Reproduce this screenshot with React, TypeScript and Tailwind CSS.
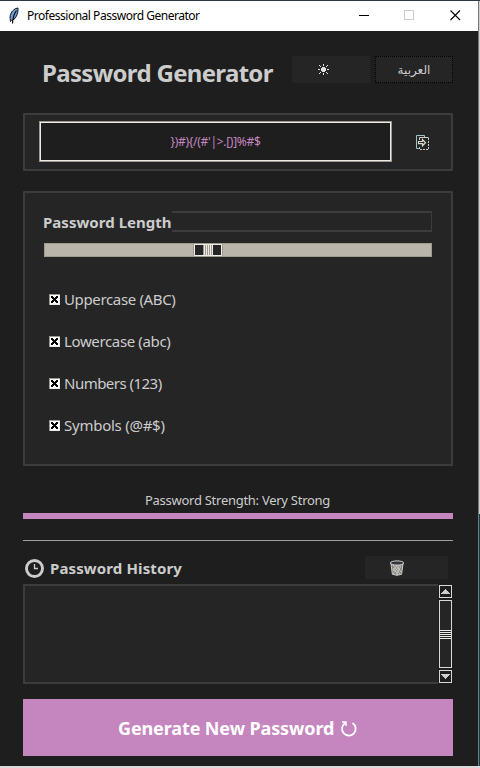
import React from "react";

function Feather() {
  return (
    <svg width="16" height="18" viewBox="0 0 16 18" className="ml-[6px] shrink-0">
      <path d="M4.5 14.5 Q3 8 6.5 4 Q9 1 12 1 Q12.5 5 10.5 9 Q8.5 13 5.5 13.5Z" fill="#6f9fd8" stroke="#15181f" strokeWidth="1" />
      <path d="M10.5 3.5 Q7 8 6.5 16.5" fill="none" stroke="#0a0a0a" strokeWidth="1.2" />
    </svg>
  );
}

function TitleBar() {
  return (
    <div className="flex h-[30px] items-center bg-white text-black">
      <Feather />
      <span className="ml-[5px] w-[190px] whitespace-nowrap text-[12px] leading-[16px] tracking-[-0.48px]">Professional Password Generator</span>
      <svg width="120" height="30" viewBox="0 0 120 30" className="ml-auto mr-[7px]" shapeRendering="crispEdges">
        <path d="M8 14.5h10" stroke="#000" />
        <rect x="53.5" y="9.5" width="9" height="9" fill="none" stroke="#cccccc" />
        <path d="M99.5 9.5l9.5 9.5M109 9.5l-9.5 9.5" stroke="#000" strokeWidth="1.1" shapeRendering="auto" />
      </svg>
    </div>
  );
}

function Sun() {
  return (
    <svg width="11" height="11" viewBox="0 0 11 11" shapeRendering="crispEdges" className="-ml-[16px]">
      <path d="M4 3h3v1h1v3H7v1H4V7H3V4h1zM5 0h1v2H5zM5 9h1v2H5zM0 5h2v1H0zM9 5h2v1H9zM1 1h1v1H1zM2 2h1v1H2zM9 1h1v1H9zM8 2h1v1H8zM1 9h1v1H1zM2 8h1v1H2zM9 9h1v1H9zM8 8h1v1H8z" fill="#e0e0e0" />
    </svg>
  );
}

function CopyIcon() {
  return (
    <svg width="13" height="15" viewBox="0 0 13 15" className="ml-[24px]">
      <path d="M3.5 13.5H.5V.5h8v2" fill="none" stroke="#9cc4cc" />
      <path d="M3.5 5V2.5h9" fill="none" stroke="#d0d0c8" />
      <path d="M12.5 3v11.5h-9V12" fill="none" stroke="#c9c9c9" strokeDasharray="2 1" />
      <path d="M2.5 6.5h4v-2l3 3.2-3 3v-2h-4z" fill="none" stroke="#dcdccc" strokeWidth="1.2" />
    </svg>
  );
}

function Check({ label, tracking }: { label: string; tracking: string }) {
  return (
    <div className="flex h-[42px] items-center">
      <svg width="11" height="11" viewBox="0 0 11 11" shapeRendering="crispEdges">
        <rect width="11" height="11" fill="#9e9a91" />
        <path d="M1 1h10v10H1z" fill="#eeebe7" />
        <path d="M1 1h9v9H1z" fill="#fff" />
        <path d="M2 2h2v1h1v1h1V3h1V2h2v2H8v1H7v1h1v1h1v2H7V8H6V7H5v1H4v1H2V7h1V6h1V5H3V4H2z" fill="#000" />
      </svg>
      <span className={"ml-[4px] whitespace-nowrap text-[15px] leading-[20px] text-[#cccccc] " + tracking}>{label}</span>
    </div>
  );
}

function Trash() {
  return (
    <svg width="16" height="16" viewBox="0 0 16 16" className="-ml-[19px]">
      <path d="M2 4l1.4 10.3Q8 16.3 12.6 14.3L14 4z" fill="#88847c" stroke="#c8c8c8" />
      <path d="M4 5l7 9M7 5l5 7M11 5l-7 9M8 5l-4 6M12 6l-5 9M4 8l5 7" stroke="#dedede" strokeWidth=".7" />
      <ellipse cx="8" cy="3" rx="6.7" ry="2.1" fill="#34363a" stroke="#d2d2d2" />
    </svg>
  );
}

function Arrow({ down = false }: { down?: boolean }) {
  return (
    <div className="flex h-[13px] w-[13px] items-center justify-center border border-[#d8d8d8]">
      <svg width="9" height="5" viewBox="0 0 9 5" shapeRendering="crispEdges" className={down ? "rotate-180" : ""}>
        <path d="M4 0h1v1h1v1h1v1h1v1h1v1H0V4h1V3h1V2h1V1h1z" fill="#cccccc" />
      </svg>
    </div>
  );
}

export default function App() {
  return (
    <div className="flex h-[768px] w-[480px] flex-col overflow-hidden bg-[#d9dadb] font-['Noto_Sans','DejaVu_Sans',sans-serif]">
      <div className="h-px bg-[#2b3a42]" />
      <div className="flex h-[765px]">
        <div className="w-[478px]">
          <TitleBar />
          <main className="h-[735px] bg-[#1e1e1e] pl-[23px] pr-[25px] text-[#cccccc]">
            <header className="flex h-[82px] pt-[25px]">
              <h1 className="ml-[19px] w-[250px] whitespace-nowrap text-[24px] font-bold leading-[33px] tracking-[-0.68px]">Password Generator</h1>
              <button className="flex h-[27px] w-[78px] items-center justify-center bg-[#252526]"><Sun /></button>
              <button className="ml-[5px] flex h-[27px] w-[78px] items-center justify-center border border-dotted border-black bg-[#252526] text-[12px]">العربية</button>
            </header>
            <section className="flex h-[58px] items-center rounded-[1px] border-2 border-[#3c3c3c] bg-[#252526] pl-[14px]">
              <div className="mt-[6px] h-[41px] w-[353px] self-start border border-[#9e9a91]">
                <div className="flex h-full items-center justify-center border border-[#eeebe7] bg-[#1e1e1e] text-[12px] tracking-[-0.3px] text-[#c586c0]">{"})#){/(#'|>.[)]%#$"}</div>
              </div>
              <CopyIcon />
            </section>
            <section className="mt-[20px] h-[275px] rounded-[1px] border-2 border-[#3c3c3c] bg-[#252526] pl-[18px] pr-[19px] pt-[18px]">
              <div className="flex h-[21px]">
                <h2 className="w-[129px] whitespace-nowrap text-[15px] font-bold leading-[22px] tracking-[0.03px]">Password Length</h2>
                <div className="h-[21px] flex-1 border-y-2 border-r border-[#3c3c3c]" />
              </div>
              <div className="ml-px mt-[11px] flex h-[14px] border border-[#9e9a8e] bg-[#bab5ab] pl-[148px]">
                <div className="flex h-[12px] w-[30px] items-center justify-center bg-[#9e9a91]">
                  <div className="flex h-[12px] w-[28px] border border-[#eeebe7] bg-[#252526] px-[8px]">
                    <svg width="10" height="10" shapeRendering="crispEdges"><path d="M0 0h10v10H0z" fill="#9e9a91" /><path d="M1.5 0v10M3.5 0v10M5.5 0v10M7.5 0v10M9.5 0v10" stroke="#eeebe7" /></svg>
                  </div>
                </div>
              </div>
              <div className="ml-[6px] mt-[21px]">
                <Check label="Uppercase (ABC)" tracking="tracking-[-0.35px]" />
                <Check label="Lowercase (abc)" tracking="tracking-[-0.36px]" />
                <Check label="Numbers (123)" tracking="tracking-[-0.52px]" />
                <Check label="Symbols (@#$)" tracking="tracking-[-0.25px]" />
              </div>
            </section>
            <p className="mt-[25px] h-[22px] pl-[122px] text-[13px] leading-[19px] tracking-[-0.27px]">Password Strength: Very Strong</p>
            <div className="h-[6px] bg-[#c586c0]" />
            <div className="mt-[21px] h-px bg-[#a0a0a0]" />
            <div className="flex h-[43px] pt-[15px]">
              <svg width="19" height="19" viewBox="0 0 19 19" className="ml-[2px] mt-[3px]">
                <circle cx="9.5" cy="9.5" r="8" fill="none" stroke="#cccccc" strokeWidth="2.9" />
                <path d="M9.5 5v4.5H13" fill="none" stroke="#cccccc" strokeWidth="1.3" />
              </svg>
              <h2 className="ml-[6px] w-[180px] whitespace-nowrap text-[15px] font-bold leading-[25px] tracking-[0.12px]">Password History</h2>
              <button className="ml-auto mr-[5px] flex h-[23px] w-[83px] items-center justify-center bg-[#252526]"><Trash /></button>
            </div>
            <div className="flex h-[100px]">
              <div className="w-[415px] rounded-l-[1px] border-y-2 border-l-2 border-[#3c3c3c] bg-[#252526]" />
              <div className="ml-px flex flex-col gap-[2px] pt-px">
                <Arrow />
                <div className="flex h-[68px] w-[13px] flex-col items-center border border-[#d8d8d8] bg-[#252526] pt-[29px]">
                  <svg width="11" height="9" shapeRendering="crispEdges"><path d="M0 .5h11M0 2.5h11M0 4.5h11M0 6.5h11M0 8.5h11" stroke="#eeebe7" /></svg>
                </div>
                <Arrow down />
              </div>
            </div>
            <button className="mt-[15px] flex h-[57px] w-full items-center bg-[#c586c0] pl-[95px] pt-px text-[18px] font-bold text-white">
              <span className="w-[216px] whitespace-nowrap text-left tracking-[-0.12px]">Generate New Password</span>
              <svg width="17" height="17" viewBox="0 0 17 17" className="ml-[6px]">
                <path d="M5.5 2.8A6.8 6.8 0 1 0 12.5 3" fill="none" stroke="#fff" strokeWidth="1.8" />
                <path d="M2 2h4v4" fill="none" stroke="#fff" strokeWidth="1.4" />
              </svg>
            </button>
          </main>
        </div>
        <div className="w-px bg-[#777777]" />
        <div className="flex w-px flex-col">
          <div className="h-[513px] bg-[#d0d0d0]" />
          <div className="flex-1 bg-[#064450]" />
        </div>
      </div>
    </div>
  );
}
